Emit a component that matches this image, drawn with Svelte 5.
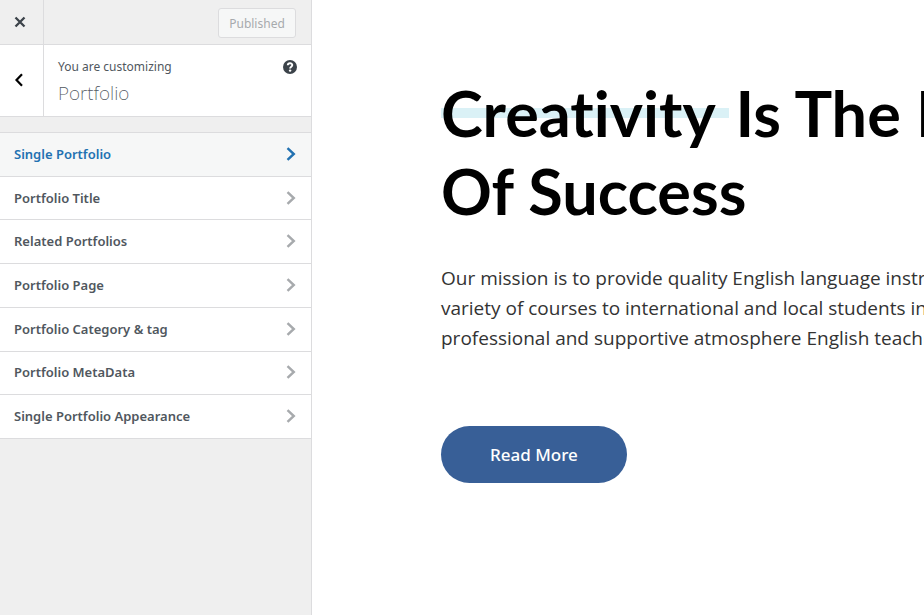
<script>
  const sections = [
    'Single Portfolio',
    'Portfolio Title',
    'Related Portfolios',
    'Portfolio Page',
    'Portfolio Category & tag',
    'Portfolio MetaData',
    'Single Portfolio Appearance'
  ];
  let active = $state(0);
</script>

<div class="app">
  <aside>
    <header class="bar">
      <button class="close" aria-label="Close">
        <svg width="12" height="12" viewBox="0 0 12 12"><path d="M1.5 1.5 L10.5 10.5 M10.5 1.5 L1.5 10.5" stroke="#3c434a" stroke-width="2.3" fill="none" /></svg>
      </button>
      <button class="published" disabled>Published</button>
    </header>
    <div class="heading">
      <button class="back" aria-label="Back">
        <svg width="10" height="14" viewBox="0 0 10 14"><path d="M8 1.2 L2.5 7 L8 12.8" stroke="#000" stroke-width="2.2" fill="none" /></svg>
      </button>
      <div class="titles">
        <span class="notice">You are customizing</span>
        <h2>Portfolio</h2>
      </div>
      <button class="help" aria-label="Help">
        <svg width="14" height="14" viewBox="0 0 14 14">
          <circle cx="7" cy="7" r="7" fill="#3c434a" />
          <path d="M4.8 5.3 C4.8 2.6 9.3 2.7 9.3 5.1 C9.3 6.7 7.1 6.7 7.1 8.5" stroke="#fff" stroke-width="1.9" fill="none" />
          <circle cx="7.1" cy="10.6" r="1.2" fill="#fff" />
        </svg>
      </button>
    </div>
    <ul>
      {#each sections as name, i}
        <li>
          <button class="section" class:active={active === i} onclick={() => (active = i)}>
            <span>{name}</span>
            <svg width="10" height="14" viewBox="0 0 10 14"><path d="M1.5 1.2 L7.8 7 L1.5 12.8" stroke="currentColor" stroke-width="2.4" fill="none" /></svg>
          </button>
        </li>
      {/each}
    </ul>
  </aside>

  <main>
    <h1><span class="mark">Creativity{' '}</span>Is The Key<br />Of Success</h1>
    <p>
      Our mission is to provide quality English language instruction<br />
      variety of courses to international and local students in a<br />
      professional and supportive atmosphere English teaching
    </p>
    <a class="cta" href="#more">Read More</a>
  </main>
</div>

<style>
  :global(body) {
    margin: 0;
    background: #fff;
  }
  .app {
    display: flex;
    min-height: 100vh;
    overflow: hidden;
  }
  button {
    margin: 0;
    padding: 0;
    border: 0;
    background: none;
    font: inherit;
    color: inherit;
    cursor: pointer;
  }
  svg {
    display: block;
    flex: none;
  }
  aside {
    flex: 0 0 312px;
    box-sizing: border-box;
    border-right: 1px solid #dcdcde;
    background: #efefef;
    color: #50575e;
    font-family: 'Noto Sans', 'Open Sans', sans-serif;
    font-size: 13px;
  }
  .bar {
    display: flex;
    align-items: center;
    justify-content: space-between;
    height: 44px;
    padding-right: 15px;
    border-bottom: 1px solid #dcdcde;
  }
  .close,
  .back {
    display: flex;
    align-items: center;
    align-self: stretch;
    box-sizing: border-box;
    width: 44px;
    padding-left: 14px;
    border-right: 1px solid #dcdcde;
  }
  .back {
    padding-bottom: 2px;
  }
  .published {
    box-sizing: border-box;
    width: 78px;
    height: 30px;
    margin-top: 2px;
    border: 1px solid #dcdcde;
    border-radius: 3px;
    background: #f6f7f7;
    color: #a7aaad;
    font-size: 12px;
  }
  .heading {
    display: flex;
    border-bottom: 1px solid #dcdcde;
    background: #fff;
  }
  .titles {
    flex: 1;
    padding: 12px 0 11px 14px;
  }
  .notice {
    display: block;
    font-size: 12px;
    line-height: 20px;
  }
  h2 {
    margin: 4px 0 0;
    font-size: 19px;
    font-weight: 200;
    line-height: 24px;
  }
  .help {
    align-self: flex-start;
    padding: 15px 14px;
  }
  ul {
    display: grid;
    grid-template-rows: repeat(7, 1fr);
    min-height: 306px;
    margin: 15px 0 0;
    padding: 0;
    border-top: 1px solid #dcdcde;
    list-style: none;
  }
  li {
    display: grid;
    border-bottom: 1px solid #dcdcde;
    background: #fff;
  }
  .section {
    display: flex;
    align-items: center;
    justify-content: space-between;
    padding: 0 15px 1px 14px;
    font-weight: 600;
    text-align: left;
  }
  .section svg {
    color: #a7aaad;
  }
  .section.active,
  .section.active svg {
    color: #2271b1;
  }
  .section.active {
    background: #f6f7f7;
  }
  main {
    flex: 1;
    min-width: 0;
    padding: 74px 0 0 129px;
    font-family: Lato, sans-serif;
    white-space: nowrap;
  }
  h1 {
    margin: 0;
    color: #000;
    font-size: 63px;
    font-weight: 700;
    font-variant-ligatures: none;
    line-height: 78px;
  }
  .mark {
    margin-right: 6px;
    background: linear-gradient(#daf1f6, #daf1f6) 0 50% / 100% 10px no-repeat;
  }
  p {
    margin: 33px 0 0;
    color: #333;
    font-family: 'Open Sans', sans-serif;
    font-size: 19px;
    font-weight: 400;
    line-height: 30px;
  }
  .cta {
    display: inline-block;
    margin-top: 73px;
    padding: 0 49px;
    border-radius: 29px;
    background: #385f97;
    color: #fff;
    font-family: 'Noto Sans', sans-serif;
    font-size: 17px;
    font-weight: 500;
    line-height: 57px;
    text-decoration: none;
  }
</style>
